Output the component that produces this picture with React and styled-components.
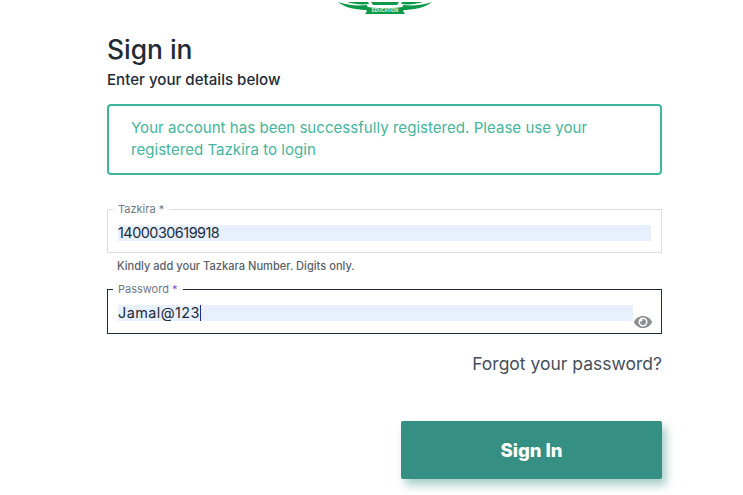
import React from 'react';
import styled, { createGlobalStyle } from 'styled-components';
import { FaEye } from 'react-icons/fa';

const GlobalStyle = createGlobalStyle`
  html, body {
    margin: 0;
    padding: 0;
    background: #fff;
    font-family: 'Inter', 'Liberation Sans', sans-serif;
    overflow: hidden;
  }
`;

const Page = styled.div`
  width: 743px;
  height: 495px;
  overflow: hidden;
`;

const LogoStrip = styled.div`
  height: 14px;
  padding-left: 335px;
  overflow: hidden;
`;

const Form = styled.div`
  width: 555px;
  margin-left: 107px;
  display: flex;
  flex-direction: column;
`;

const Title = styled.h1`
  margin: 18px 0 0;
  font-size: 26.4px;
  line-height: 34px;
  font-weight: 500;
  color: #212b36;
`;

const Subtitle = styled.p`
  margin: 4px 0 0;
  font-size: 15.1px;
  line-height: 20px;
  font-weight: 500;
  color: #212b36;
`;

const Alert = styled.div`
  box-sizing: border-box;
  height: 71px;
  margin-top: 14px;
  padding: 11px 22px;
  border: 2px solid #3fb39b;
  border-radius: 4px;
  font-size: 15.1px;
  line-height: 22px;
  color: #45b59d;
`;

const Field = styled.fieldset`
  box-sizing: border-box;
  height: ${p => p.$height}px;
  margin: ${p => p.$top}px 0 0;
  padding: 0 ${p => p.$right}px 0 5px;
  min-width: 0;
  border: 1px solid ${p => (p.$active ? '#212b36' : '#dcdfe2')};
  display: flex;
  align-items: flex-start;
  position: relative;
`;

const Legend = styled.legend`
  padding: 0 5px;
  font-size: 11px;
  line-height: 12px;
  color: #6f777f;
`;

const Required = styled.span`
  color: ${p => p.$color};
`;

const Value = styled.div`
  flex: 1;
  height: 16px;
  margin: 10px 0 0 5px;
  background: #e8f0fe;
  font-size: 14.4px;
  line-height: 16px;
  letter-spacing: ${p => p.$spacing}px;
  color: #212b36;
  white-space: nowrap;
`;

const Caret = styled.span`
  display: inline-block;
  width: 1px;
  height: 16px;
  vertical-align: top;
  background: #212b80;
`;

const EyeButton = styled.span`
  position: absolute;
  right: 9px;
  top: 18px;
  display: flex;
  color: #8c8f92;
  font-size: 18px;
`;

const Helper = styled.p`
  margin: 6px 0 0 10px;
  font-size: 11.1px;
  line-height: 14px;
  font-weight: 500;
  color: #5a6168;
`;

const ForgotRow = styled.div`
  margin-top: 19px;
  text-align: right;
  font-size: 17.5px;
  line-height: 22px;
  color: #454f5b;
`;

const ButtonRow = styled.div`
  margin-top: 46px;
  display: flex;
  justify-content: flex-end;
`;

const SubmitButton = styled.button`
  width: 261px;
  height: 58px;
  border: none;
  border-radius: 2px;
  background: #358f82;
  color: #fff;
  font-family: inherit;
  font-size: 18.5px;
  font-weight: 800;
  box-shadow: 4px 6px 10px rgba(53, 143, 130, 0.45);
`;

const Logo = () => (
  <svg width="100" height="14" viewBox="0 0 100 14">
    <path d="M3 0 C12 3 22 4 32 3 L33 8 C22 8 10 6 3 0 Z" fill="#0c9a4a" />
    <path d="M97 0 C88 3 78 4 68 3 L67 8 C78 8 90 6 97 0 Z" fill="#0c9a4a" />
    <path d="M12 0 H33 L34 2 C26 3 18 2 12 0 Z" fill="#0c9a4a" />
    <path d="M88 0 H67 L66 2 C74 3 82 2 88 0 Z" fill="#0c9a4a" />
    <path d="M28 4 C40 7 60 7 72 4 L68 9 L70 12 H30 L32 9 Z" fill="#0c9a4a" />
    <path d="M36 0 H64 L62 3 H38 Z" fill="#0c9a4a" />
    <text x="50" y="10" textAnchor="middle" fontSize="4.5" fontFamily="'Liberation Sans', sans-serif" fontWeight="700" fill="#e6f5ec">EDUCATION</text>
  </svg>
);

const App = () => {
  return (
    <Page>
      <GlobalStyle />
      <LogoStrip>
        <Logo />
      </LogoStrip>
      <Form>
        <Title>Sign in</Title>
        <Subtitle>Enter your details below</Subtitle>
        <Alert>
          Your account has been successfully registered. Please use your registered Tazkira to login
        </Alert>
        <Field $height={50} $top={28} $right={10}>
          <Legend>
            Tazkira <Required $color="#6f777f">*</Required>
          </Legend>
          <Value $spacing={-0.5}>1400030619918</Value>
        </Field>
        <Helper>Kindly add your Tazkara Number. Digits only.</Helper>
        <Field $height={51} $top={10} $right={28} $active>
          <Legend>
            Password <Required $color="#5b5bd6">*</Required>
          </Legend>
          <Value $spacing={0.45}>
            Jamal@123<Caret />
          </Value>
          <EyeButton>
            <FaEye />
          </EyeButton>
        </Field>
        <ForgotRow>Forgot your password?</ForgotRow>
        <ButtonRow>
          <SubmitButton>Sign In</SubmitButton>
        </ButtonRow>
      </Form>
    </Page>
  );
};

export default App;
